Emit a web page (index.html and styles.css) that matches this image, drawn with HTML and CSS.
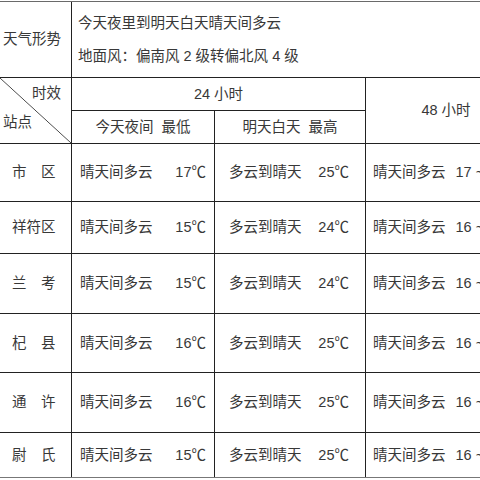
FILE: index.html
```html
<!DOCTYPE html>
<html lang="zh-CN">
<head>
<meta charset="utf-8">
<title>天气预报</title>
<link rel="stylesheet" href="styles.css">
</head>
<body>
<div class="sheet">
  <div class="cell title">天气形势</div>
  <div class="cell desc">
    <div>今天夜里到明天白天晴天间多云</div>
    <div>地面风：偏南风 2 级转偏北风 4 级</div>
  </div>
  <div class="cell diag">
    <span class="diag-top">时效</span>
    <span class="diag-bottom">站点</span>
  </div>
  <div class="cell h24">24 小时</div>
  <div class="cell h48">48 小时</div>
  <div class="cell night">今天夜间&nbsp;&nbsp;最低</div>
  <div class="cell day">明天白天&nbsp;&nbsp;最高</div>

  <div class="cell station">市　区</div>
  <div class="cell c2"><span>晴天间多云</span><span>17℃</span></div>
  <div class="cell c3"><span>多云到晴天</span><span>25℃</span></div>
  <div class="cell c4"><span>晴天间多云</span><span>17 ~ 25℃</span></div>

  <div class="cell station">祥符区</div>
  <div class="cell c2"><span>晴天间多云</span><span>15℃</span></div>
  <div class="cell c3"><span>多云到晴天</span><span>24℃</span></div>
  <div class="cell c4"><span>晴天间多云</span><span>16 ~ 24℃</span></div>

  <div class="cell station">兰　考</div>
  <div class="cell c2"><span>晴天间多云</span><span>15℃</span></div>
  <div class="cell c3"><span>多云到晴天</span><span>24℃</span></div>
  <div class="cell c4"><span>晴天间多云</span><span>16 ~ 24℃</span></div>

  <div class="cell station">杞　县</div>
  <div class="cell c2"><span>晴天间多云</span><span>16℃</span></div>
  <div class="cell c3"><span>多云到晴天</span><span>25℃</span></div>
  <div class="cell c4"><span>晴天间多云</span><span>16 ~ 25℃</span></div>

  <div class="cell station">通　许</div>
  <div class="cell c2"><span>晴天间多云</span><span>16℃</span></div>
  <div class="cell c3"><span>多云到晴天</span><span>25℃</span></div>
  <div class="cell c4"><span>晴天间多云</span><span>16 ~ 25℃</span></div>

  <div class="cell station">尉　氏</div>
  <div class="cell c2"><span>晴天间多云</span><span>15℃</span></div>
  <div class="cell c3"><span>多云到晴天</span><span>25℃</span></div>
  <div class="cell c4"><span>晴天间多云</span><span>16 ~ 25℃</span></div>
</div>
</body>
</html>
```

FILE: styles.css
```css
html, body {
  margin: 0;
  padding: 0;
  background: #fff;
  overflow: hidden;
  width: 480px;
  height: 480px;
}

.sheet {
  margin-top: 1px;
  display: grid;
  grid-template-columns: 71px 142px 150px 160px;
  grid-template-rows: 75px 32px 32px 57px 51px 59px 58px 59px 44px;
  gap: 1px;
  background: #222;
  border-top: 1px solid #6a6a6a;
  border-bottom: 1px solid #777;
  width: 526px;
  font-family: "Liberation Sans", "Noto Sans CJK SC", sans-serif;
  font-size: 14.5px;
  color: #383838;
}

.cell {
  background: #fff;
  display: flex;
  align-items: center;
  white-space: nowrap;
  line-height: 1;
}

.title {
  padding-left: 3px;
}

.desc {
  grid-column: 2 / 5;
  flex-direction: column;
  align-items: flex-start;
  justify-content: center;
  padding-left: 6px;
  line-height: 33px;
}

.diag {
  grid-row: 2 / 4;
  flex-direction: column;
  align-items: stretch;
  justify-content: flex-start;
  background: linear-gradient(to top right, #fff calc(50% - 0.7px), #444 50%, #fff calc(50% + 0.7px));
}

.diag-top {
  align-self: flex-end;
  padding-right: 10px;
  margin-top: 8px;
}

.diag-bottom {
  align-self: flex-start;
  padding-left: 3px;
  margin-top: 14px;
}

.h24 {
  grid-column: 2 / 4;
  justify-content: center;
}

.h48 {
  grid-column: 4;
  grid-row: 2 / 4;
  justify-content: center;
}

.night,
.day {
  justify-content: center;
}

.station {
  padding-left: 12px;
}

.c2 {
  justify-content: space-between;
  padding: 0 8px;
}

.c3 {
  justify-content: space-between;
  padding: 0 16px 0 14px;
}

.c4 {
  gap: 10px;
  padding-left: 7px;
}
```
